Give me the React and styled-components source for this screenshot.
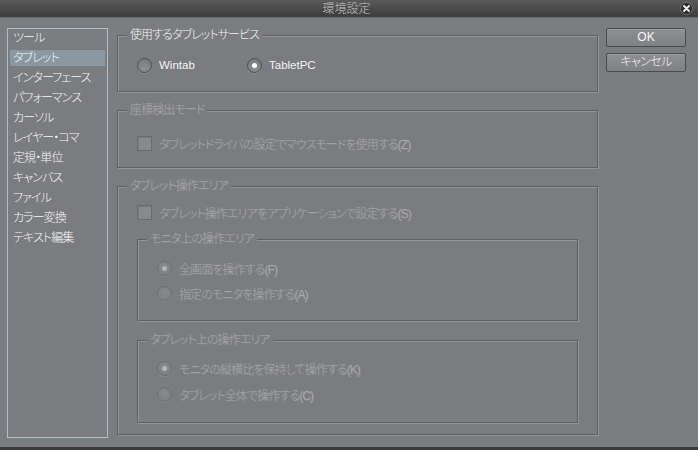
import React from 'react';
import styled, { createGlobalStyle } from 'styled-components';

const BG = '#7b7c80';

const GlobalStyle = createGlobalStyle`
  html, body { margin: 0; padding: 0; background: #38393b; }
  * { box-sizing: border-box; }
`;

const Window = styled.div`
  width: 698px;
  height: 450px;
  display: flex;
  flex-direction: column;
  background: ${BG};
  overflow: hidden;
  font-family: "Liberation Sans", "Noto Sans CJK JP", sans-serif;
  font-size: 12px;
  font-weight: 300;
  letter-spacing: -0.9px;
  font-feature-settings: "palt";
  color: #f4f4f4;
`;

const TitleBar = styled.div`
  height: 18px;
  flex: none;
  display: grid;
  grid-template-columns: 1fr auto 1fr;
  align-items: center;
  padding: 0 5px 0 0;
  background: linear-gradient(#5a5a5a, #3c3c3c);
  border-bottom: 1px solid #6a6b6e;
`;

const Title = styled.div`
  grid-column: 2;
  font-size: 12px;
  line-height: 16px;
  letter-spacing: 0;
  color: #c4c4c4;
  font-feature-settings: normal;
`;

const CloseButton = styled.div`
  grid-column: 3;
  justify-self: end;
  width: 13px;
  height: 13px;
  display: flex;
`;

const Body = styled.div`
  flex: 1;
  display: flex;
  align-items: flex-start;
  padding: 10px 0 0 7px;
`;

const CategoryList = styled.div`
  width: 101px;
  height: 410px;
  flex: none;
  border: 1px solid #a9c1cd;
  padding: 1px 0 0;
  display: flex;
  flex-direction: column;
  gap: 4px;
`;

const CategoryItem = styled.div`
  height: 16px;
  line-height: 16px;
  margin: 0 2px;
  padding-left: 3px;
  white-space: nowrap;
  color: #f6f6f6;
  background: ${p => (p.$selected ? '#8b97a1' : 'transparent')};
`;

const Main = styled.div`
  width: 481px;
  margin-left: 9px;
  display: flex;
  flex-direction: column;
  gap: 11px;
  flex: none;
`;

const Group = styled.fieldset`
  margin: 0;
  padding: 0;
  min-width: 0;
  border: 1px solid #5f6064;
  box-shadow: inset 1px 1px 0 #939498, 1px 1px 0 #939498;
`;

const Legend = styled.legend`
  margin-left: 9px;
  padding: 0 3px;
  line-height: 14px;
  font-size: 12px;
  background: ${BG};
  color: ${p => (p.$disabled ? '#a9aaae' : '#f4f4f4')};
  text-shadow: ${p => (p.$disabled ? '1px 1px 0 rgba(255,255,255,0.08)' : 'none')};
`;

const GroupBody = styled.div`
  padding: ${p => p.$pt}px 19px ${p => p.$pb}px;
  display: flex;
  flex-direction: column;
  gap: ${p => p.$gap || 0}px;
`;

const OptionRow = styled.div`
  display: flex;
  align-items: center;
`;

const Option = styled.label`
  display: flex;
  align-items: center;
  gap: 7px;
  height: 16px;
  width: ${p => (p.$width ? `${p.$width}px` : 'auto')};
  white-space: nowrap;
  font-size: ${p => (p.$latin ? '11.5px' : '12px')};
  letter-spacing: ${p => (p.$latin ? '0' : '-0.9px')};
  color: ${p => (p.$disabled ? '#a7a8ac' : '#f4f4f4')};
  text-shadow: ${p => (p.$disabled ? '1px 1px 0 rgba(255,255,255,0.08)' : 'none')};
`;

const RadioDot = styled.span`
  width: 15px;
  height: 15px;
  flex: none;
  border-radius: 50%;
  border: 1px solid ${p => (p.$disabled ? '#6c6d71' : '#505155')};
  background: ${p =>
    p.$disabled
      ? 'radial-gradient(circle at 50% 40%, #88898d, #7c7d81)'
      : 'radial-gradient(circle at 50% 70%, #8e8f93, #737478)'};
  box-shadow: 0 1px 0 rgba(255,255,255,0.12);
  display: flex;
  align-items: center;
  justify-content: center;
  &::after {
    content: '';
    width: 5px;
    height: 5px;
    border-radius: 50%;
    background: ${p => (p.$disabled ? '#b4b5b8' : '#ffffff')};
    display: ${p => (p.$checked ? 'block' : 'none')};
  }
`;

const CheckBox = styled.span`
  width: 15px;
  height: 15px;
  flex: none;
  border: 1px solid #6a6b6f;
  background: #88898d;
  box-shadow: inset 1px 1px 0 #7a7b7f;
`;

const ButtonColumn = styled.div`
  width: 80px;
  margin-left: 8px;
  flex: none;
  display: flex;
  flex-direction: column;
  gap: 6px;
`;

const Button = styled.div`
  height: 19px;
  line-height: 17px;
  text-align: center;
  border: 1px solid #4a4b4f;
  border-radius: 2px;
  background: linear-gradient(#8e8f93, #808185);
  box-shadow: inset 0 1px 0 #9d9ea2;
  color: #f6f6f6;
  font-size: 12px;
  letter-spacing: ${p => (p.$latin ? '0' : '-0.6px')};
`;

const BottomStrip = styled.div`
  height: 3px;
  flex: none;
  background: #3a3b3d;
`;

const categories = [
  'ツール',
  'タブレット',
  'インターフェース',
  'パフォーマンス',
  'カーソル',
  'レイヤー・コマ',
  '定規・単位',
  'キャンバス',
  'ファイル',
  'カラー変換',
  'テキスト編集',
];

function Radio({ label, checked, disabled, width, latin }) {
  return (
    <Option $disabled={disabled} $width={width} $latin={latin}>
      <RadioDot $checked={checked} $disabled={disabled} />
      <span>{label}</span>
    </Option>
  );
}

function Check({ label }) {
  return (
    <Option $disabled>
      <CheckBox />
      <span>{label}</span>
    </Option>
  );
}

export default function App() {
  return (
    <>
      <GlobalStyle />
      <Window>
        <TitleBar>
          <Title>環境設定</Title>
          <CloseButton>
            <svg width="13" height="13" viewBox="0 0 13 13">
              <circle cx="6.5" cy="6.5" r="6" fill="#2b2b2b" stroke="#7a7a7a" strokeWidth="0.8" />
              <path d="M4 4 L9 9 M9 4 L4 9" stroke="#f0f0f0" strokeWidth="1.9" strokeLinecap="round" />
            </svg>
          </CloseButton>
        </TitleBar>
        <Body>
          <CategoryList>
            {categories.map(c => (
              <CategoryItem key={c} $selected={c === 'タブレット'}>
                {c}
              </CategoryItem>
            ))}
          </CategoryList>
          <Main>
            <Group>
              <Legend>使用するタブレットサービス</Legend>
              <GroupBody $pt={15} $pb={18}>
                <OptionRow>
                  <Radio label="Wintab" width={110} latin />
                  <Radio label="TabletPC" checked latin />
                </OptionRow>
              </GroupBody>
            </Group>
            <Group>
              <Legend $disabled>座標検出モード</Legend>
              <GroupBody $pt={18} $pb={16}>
                <Check label="タブレットドライバの設定でマウスモードを使用する(Z)" />
              </GroupBody>
            </Group>
            <Group>
              <Legend $disabled>タブレット操作エリア</Legend>
              <GroupBody $pt={11} $pb={11} $gap={12}>
                <Check label="タブレット操作エリアをアプリケーションで設定する(S)" />
                <Group>
                  <Legend $disabled>モニタ上の操作エリア</Legend>
                  <GroupBody $pt={14} $pb={19} $gap={9}>
                    <Radio label="全画面を操作する(F)" checked disabled />
                    <Radio label="指定のモニタを操作する(A)" disabled />
                  </GroupBody>
                </Group>
                <Group>
                  <Legend $disabled>タブレット上の操作エリア</Legend>
                  <GroupBody $pt={13} $pb={20} $gap={10}>
                    <Radio label="モニタの縦横比を保持して操作する(K)" checked disabled />
                    <Radio label="タブレット全体で操作する(C)" disabled />
                  </GroupBody>
                </Group>
              </GroupBody>
            </Group>
          </Main>
          <ButtonColumn>
            <Button $latin>OK</Button>
            <Button>キャンセル</Button>
          </ButtonColumn>
        </Body>
        <BottomStrip />
      </Window>
    </>
  );
}
